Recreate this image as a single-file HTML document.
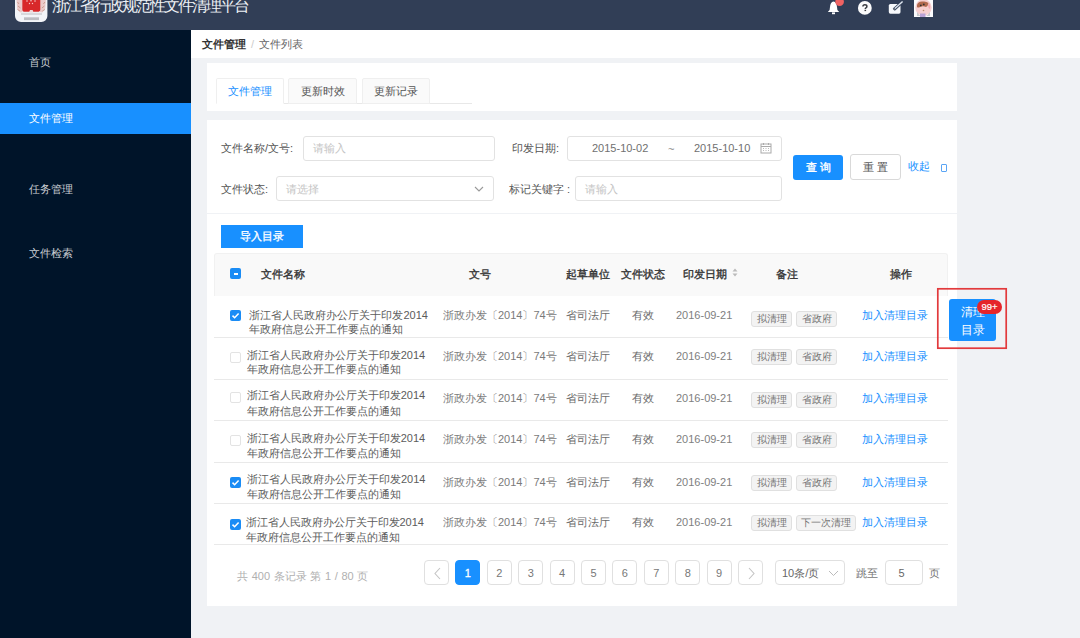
<!DOCTYPE html>
<html><head><meta charset="utf-8">
<style>
*{box-sizing:border-box;margin:0;padding:0}
html,body{width:1080px;height:638px;overflow:hidden;background:#f0f2f5;font-family:"Liberation Sans",sans-serif;font-size:11px;color:#666}
.a{position:absolute;white-space:nowrap}
.hdr{left:0;top:0;width:1080px;height:30px;background:#313e56}
.side{left:0;top:30px;width:191px;height:608px;background:#001429}
.menu{left:29px;color:#c8ccd2;font-size:11px;line-height:14px}
.crumb{left:191px;top:30px;width:889px;height:28px;background:#fff}
.card{background:#fff}
.tab{height:26px;border:1px solid #efefef;background:#fafafa;color:#555;font-size:11px;line-height:24px;text-align:center;border-radius:2px 2px 0 0}
.lbl{color:#555;font-size:11px;line-height:14px}
.inp{border:1px solid #e2e2e2;border-radius:3px;background:#fff;height:25px}
.ph{color:#c4c4c4;font-size:11px;line-height:14px}
.btn{border-radius:3px;font-size:11px;text-align:center}
.th{color:#333;font-weight:normal;-webkit-text-stroke:0.35px #333;font-size:11px;line-height:14px}
.td{color:#666;font-size:11px;line-height:14px}
.cb{width:11px;height:11px;border-radius:2px}
.cbon{background:#1a8cf5}
.cboff{border:1px solid #e3e3e3;background:#fff}
.line{height:1px;background:#e9e9e9}
.tag{height:16px;border:1px solid #e0e0e0;background:#f3f3f3;border-radius:3px;color:#777;font-size:10px;line-height:14px;text-align:center}
.link{color:#1890ff;font-size:11px;line-height:14px}
.pg{width:25px;height:25px;border:1px solid #e0e0e0;border-radius:4px;background:#fff;color:#666;font-size:11px;line-height:25px;text-align:center}
</style></head><body>
<!-- header -->
<div class="a hdr"></div>
<svg class="a" style="left:14.7px;top:0" width="33" height="23" viewBox="0 0 33 23">
  <path d="M0 0H32.4V16A6 6 0 0 1 26.4 22H6A6 6 0 0 1 0 16Z" fill="#f3f4f8"/>
  <path d="M1.5 0H7.5V12L5 12.5L2.2 9Z" fill="#eccaca"/>
  <path d="M30.9 0H25V12L27.4 12.5L30.2 9Z" fill="#eccaca"/>
  <path d="M2.5 2L4 4M3 6L5.5 8M2.5 9.5L5 11" stroke="#c89a8a" stroke-width="0.9"/>
  <path d="M29.9 2L28.4 4M29.4 6L26.9 8M29.9 9.5L27.4 11" stroke="#c89a8a" stroke-width="0.9"/>
  <path d="M7.3 0H25.3V9.5Q25.3 11.8 22.5 11.8H18.5L16.3 10L14.1 11.8H10Q7.3 11.8 7.3 9.5Z" fill="#d8282a"/>
  <circle cx="12" cy="1" r="0.8" fill="#f6c8c8"/><circle cx="16" cy="0.8" r="0.8" fill="#f6c8c8"/><circle cx="20" cy="1" r="0.8" fill="#f6c8c8"/>
  <circle cx="14.5" cy="3.5" r="0.7" fill="#f6c8c8"/><circle cx="17.5" cy="3.5" r="0.7" fill="#f6c8c8"/>
  <rect x="14.8" y="10" width="3" height="2.5" fill="#f0d6d6"/>
  <rect x="6" y="12.8" width="21" height="2.2" fill="#d8d8dc"/>
  <rect x="9" y="17.3" width="15" height="2.8" fill="#bdbdc2"/>
</svg>
<div class="a" style="left:52px;top:-4.5px;color:#eef1f5;font-size:16px;line-height:19px;letter-spacing:-2px">浙江省行政规范性文件清理平台</div>
<!-- header icons -->
<svg class="a" style="left:825px;top:0" width="22" height="16" viewBox="0 0 22 16">
  <path d="M8.5 1.4C6.3 1.6 5.2 4 5 7L4.6 10L2.8 12H14.2L12.4 10L12 7C11.8 4 10.7 1.6 8.5 1.4Z" fill="#fff"/>
  <rect x="7" y="12.4" width="3" height="1.8" fill="#fff"/>
  <circle cx="14.6" cy="1.8" r="4.3" fill="#f06262"/>
</svg>
<svg class="a" style="left:856px;top:0" width="18" height="16" viewBox="0 0 18 16">
  <circle cx="8.85" cy="7.9" r="6.9" fill="#fbfbfc"/>
  <path d="M6.9 6.6Q6.9 4.8 8.9 4.8Q10.9 4.8 10.9 6.4Q10.9 7.4 9.9 7.9Q9.3 8.2 9.3 9.1" fill="none" stroke="#3b3d42" stroke-width="1.5"/>
  <rect x="8.5" y="9.8" width="1.6" height="1.3" fill="#3b3d42"/>
</svg>
<svg class="a" style="left:886px;top:0" width="20" height="16" viewBox="0 0 20 16">
  <rect x="2.8" y="3.9" width="11.7" height="9.8" rx="1.6" fill="#f6f8fb"/>
  <path d="M7.8 9.6 L16.6 1.6" stroke="#313e56" stroke-width="3"/>
  <path d="M7.8 9.6 L16.6 1.6" stroke="#dfe6f0" stroke-width="1.4"/>
  <path d="M7.6 9.8 L9 8.5" stroke="#555c68" stroke-width="1.4"/>
</svg>
<svg class="a" style="left:914px;top:0" width="19" height="17" viewBox="0 0 19 17">
  <rect width="19" height="17" fill="#fbfbfd"/>
  <circle cx="9.5" cy="7.5" r="8.2" fill="#f7cfd0"/>
  <path d="M3 12 Q5 15 7 16 L3 16Z" fill="#c9c9cc"/>
  <path d="M16 12 Q14 15 12 16 L16 16Z" fill="#c9c9cc"/>
  <path d="M3 5 Q4 1 9 1.5 Q12 1 14.5 3 Q14 6 12 7 Q9 5.5 6 7 Q4 8 3 7Z" fill="#b26a4e"/>
  <circle cx="6.8" cy="5.4" r="0.9" fill="#333"/>
  <circle cx="9.8" cy="4.4" r="0.9" fill="#333"/>
  <path d="M15 3 Q17 6 16 9 Q14 8 14 5Z" fill="#f3a9b0"/>
  <rect x="6" y="13.5" width="5.5" height="3.5" fill="#b9a2d6"/>
  <circle cx="9.5" cy="10.5" r="0.8" fill="#b98a66"/>
</svg>

<!-- sidebar -->
<div class="a side"></div>
<div class="a menu" style="top:55px">首页</div>
<div class="a" style="left:0;top:103px;width:191px;height:31px;background:#1890ff"></div>
<div class="a menu" style="top:111px;color:#fff">文件管理</div>
<div class="a menu" style="top:182px">任务管理</div>
<div class="a menu" style="top:246px">文件检索</div>

<!-- breadcrumb -->
<div class="a crumb"></div>
<div class="a" style="left:202px;top:37px;font-size:11px;line-height:14px;color:#333;font-weight:bold">文件管理</div>
<div class="a" style="left:251px;top:37px;font-size:11px;line-height:14px;color:#ccc">/</div>
<div class="a" style="left:259px;top:37px;font-size:11px;line-height:14px;color:#666">文件列表</div>

<!-- tabs card -->
<div class="a card" style="left:207px;top:63px;width:750px;height:48px"></div>
<div class="a" style="left:216px;top:103px;width:256px;height:1px;background:#e8e8e8"></div>
<div class="a tab" style="left:216px;top:78px;width:68px;background:#fff;border-bottom-color:#fff;color:#1890ff">文件管理</div>
<div class="a tab" style="left:288px;top:78px;width:69px">更新时效</div>
<div class="a tab" style="left:362px;top:78px;width:68px">更新记录</div>

<!-- search card -->
<div class="a card" style="left:207px;top:120px;width:750px;height:93px"></div>
<div class="a lbl" style="left:221px;top:141px">文件名称/文号:</div>
<div class="a inp" style="left:303px;top:136px;width:192px"></div>
<div class="a ph" style="left:313px;top:141px">请输入</div>
<div class="a lbl" style="left:221px;top:182px">文件状态:</div>
<div class="a inp" style="left:276px;top:176px;width:218px"></div>
<div class="a ph" style="left:286px;top:182px">请选择</div>
<svg class="a" style="left:474px;top:186px" width="10" height="6" viewBox="0 0 10 6"><path d="M1 1 L5 5 L9 1" stroke="#999" stroke-width="1.1" fill="none"/></svg>

<div class="a lbl" style="left:512px;top:141px">印发日期:</div>
<div class="a inp" style="left:567px;top:136px;width:215px"></div>
<div class="a td" style="left:592px;top:141px;color:#707070">2015-10-02</div>
<div class="a td" style="left:668px;top:142px;color:#888">~</div>
<div class="a td" style="left:694px;top:141px;color:#707070">2015-10-10</div>
<svg class="a" style="left:760px;top:142px" width="12" height="12" viewBox="0 0 12 12"><rect x="1" y="2" width="10" height="9" fill="none" stroke="#aaa" stroke-width="1"/><path d="M1 4.5h10M3.5 1v2M8.5 1v2" stroke="#aaa" stroke-width="1"/><path d="M3 6.5h1M5.5 6.5h1M8 6.5h1M3 8.5h1M5.5 8.5h1M8 8.5h1" stroke="#bbb" stroke-width="1"/></svg>

<div class="a lbl" style="left:509px;top:182px">标记关键字 :</div>
<div class="a inp" style="left:575px;top:176px;width:207px"></div>
<div class="a ph" style="left:585px;top:182px">请输入</div>

<div class="a btn" style="left:793px;top:155px;width:50px;height:25px;background:#1890ff;color:#fff;line-height:25px;-webkit-text-stroke:0.35px #fff;letter-spacing:3px;padding-left:3px">查询</div>
<div class="a btn" style="left:850px;top:154px;width:51px;height:26px;border:1px solid #d9d9d9;background:#fff;color:#555;line-height:24px;letter-spacing:3px;padding-left:3px">重置</div>
<div class="a link" style="left:908px;top:159px">收起</div>
<div class="a" style="left:941px;top:164.3px;width:6px;height:7.5px;border:1px solid #5aa5f5;border-radius:1px"></div>

<!-- table card -->
<div class="a card" style="left:207px;top:214px;width:750px;height:392px"></div>
<div class="a btn" style="left:221px;top:225px;width:82px;height:23px;background:#1890ff;color:#fff;line-height:23px;font-size:11px;border-radius:0;-webkit-text-stroke:0.3px #fff">导入目录</div>
<div class="a" style="left:214px;top:253px;width:734px;height:43px;background:#f9f9f9;border-radius:3px 3px 0 0;border:1px solid #f1f1f1;border-bottom:none"></div>
<div class="a cb cbon" style="left:230px;top:268px"><div style="position:absolute;left:3.5px;top:5px;width:4px;height:1.5px;background:#fff"></div></div>
<div class="a th" style="left:261px;top:266.5px">文件名称</div>
<div class="a th" style="left:469px;top:266.5px">文号</div>
<div class="a th" style="left:566px;top:266.5px">起草单位</div>
<div class="a th" style="left:621px;top:266.5px">文件状态</div>
<div class="a th" style="left:683px;top:266.5px">印发日期</div>
<svg class="a" style="left:731.5px;top:267.5px" width="6" height="9" viewBox="0 0 6 9"><path d="M3 0.5L5.5 3.5H0.5Z M3 8.5L5.5 5.5H0.5Z" fill="#bbb"/></svg>
<div class="a th" style="left:776px;top:266.5px">备注</div>
<div class="a th" style="left:890px;top:266.5px">操作</div>

<div class="a cb cbon" style="left:230px;top:310.1px"><svg style="position:absolute;left:0;top:0" width="11" height="11" viewBox="0 0 11 11"><path d="M2.5 5.6 L4.6 7.7 L8.6 3.4" stroke="#fff" stroke-width="1.5" fill="none"/></svg></div>
<div class="a td" style="left:249.4px;top:307.5px;color:#5c5c5c">浙江省人民政府办公厅关于印发2014</div>
<div class="a td" style="left:249.4px;top:322.1px;color:#5c5c5c">年政府信息公开工作要点的通知</div>
<div class="a td" style="left:443px;top:307.7px;color:#7a7a7a">浙政办发〔2014〕74号</div>
<div class="a td" style="left:566px;top:307.7px;color:#6a6a6a">省司法厅</div>
<div class="a td" style="left:632px;top:307.7px;color:#6a6a6a">有效</div>
<div class="a td" style="left:676px;top:307.7px;color:#808080">2016-09-21</div>
<div class="a tag" style="left:751px;top:310.8px;width:41px">拟清理</div>
<div class="a tag" style="left:796px;top:310.8px;width:41px">省政府</div>
<div class="a link" style="left:862px;top:307.7px">加入清理目录</div>
<div class="a line" style="left:214px;top:336.5px;width:734px"></div>
<div class="a cb cboff" style="left:230px;top:352.4px"></div>
<div class="a td" style="left:246.7px;top:348.4px;color:#5c5c5c">浙江省人民政府办公厅关于印发2014</div>
<div class="a td" style="left:246.7px;top:362.2px;color:#5c5c5c">年政府信息公开工作要点的通知</div>
<div class="a td" style="left:443px;top:349.1px;color:#7a7a7a">浙政办发〔2014〕74号</div>
<div class="a td" style="left:566px;top:349.1px;color:#6a6a6a">省司法厅</div>
<div class="a td" style="left:632px;top:349.1px;color:#6a6a6a">有效</div>
<div class="a td" style="left:676px;top:349.1px;color:#808080">2016-09-21</div>
<div class="a tag" style="left:751px;top:349px;width:41px">拟清理</div>
<div class="a tag" style="left:796px;top:349px;width:41px">省政府</div>
<div class="a link" style="left:862px;top:349.1px">加入清理目录</div>
<div class="a line" style="left:214px;top:378.5px;width:734px"></div>
<div class="a cb cboff" style="left:230px;top:392.2px"></div>
<div class="a td" style="left:246.7px;top:388.3px;color:#5c5c5c">浙江省人民政府办公厅关于印发2014</div>
<div class="a td" style="left:246.7px;top:403.6px;color:#5c5c5c">年政府信息公开工作要点的通知</div>
<div class="a td" style="left:443px;top:391.0px;color:#7a7a7a">浙政办发〔2014〕74号</div>
<div class="a td" style="left:566px;top:391.0px;color:#6a6a6a">省司法厅</div>
<div class="a td" style="left:632px;top:391.0px;color:#6a6a6a">有效</div>
<div class="a td" style="left:676px;top:391.0px;color:#808080">2016-09-21</div>
<div class="a tag" style="left:751px;top:391.6px;width:41px">拟清理</div>
<div class="a tag" style="left:796px;top:391.6px;width:41px">省政府</div>
<div class="a link" style="left:862px;top:391.0px">加入清理目录</div>
<div class="a line" style="left:214px;top:420px;width:734px"></div>
<div class="a cb cboff" style="left:230px;top:434.7px"></div>
<div class="a td" style="left:246.7px;top:431.3px;color:#5c5c5c">浙江省人民政府办公厅关于印发2014</div>
<div class="a td" style="left:246.7px;top:446.1px;color:#5c5c5c">年政府信息公开工作要点的通知</div>
<div class="a td" style="left:443px;top:432.3px;color:#7a7a7a">浙政办发〔2014〕74号</div>
<div class="a td" style="left:566px;top:432.3px;color:#6a6a6a">省司法厅</div>
<div class="a td" style="left:632px;top:432.3px;color:#6a6a6a">有效</div>
<div class="a td" style="left:676px;top:432.3px;color:#808080">2016-09-21</div>
<div class="a tag" style="left:751px;top:432.4px;width:41px">拟清理</div>
<div class="a tag" style="left:796px;top:432.4px;width:41px">省政府</div>
<div class="a link" style="left:862px;top:432.3px">加入清理目录</div>
<div class="a line" style="left:214px;top:461.6px;width:734px"></div>
<div class="a cb cbon" style="left:230px;top:476.5px"><svg style="position:absolute;left:0;top:0" width="11" height="11" viewBox="0 0 11 11"><path d="M2.5 5.6 L4.6 7.7 L8.6 3.4" stroke="#fff" stroke-width="1.5" fill="none"/></svg></div>
<div class="a td" style="left:246.9px;top:472.2px;color:#5c5c5c">浙江省人民政府办公厅关于印发2014</div>
<div class="a td" style="left:246.9px;top:487.1px;color:#5c5c5c">年政府信息公开工作要点的通知</div>
<div class="a td" style="left:443px;top:474.7px;color:#7a7a7a">浙政办发〔2014〕74号</div>
<div class="a td" style="left:566px;top:474.7px;color:#6a6a6a">省司法厅</div>
<div class="a td" style="left:632px;top:474.7px;color:#6a6a6a">有效</div>
<div class="a td" style="left:676px;top:474.7px;color:#808080">2016-09-21</div>
<div class="a tag" style="left:751px;top:474.6px;width:41px">拟清理</div>
<div class="a tag" style="left:796px;top:474.6px;width:41px">省政府</div>
<div class="a link" style="left:862px;top:474.7px">加入清理目录</div>
<div class="a line" style="left:214px;top:503px;width:734px"></div>
<div class="a cb cbon" style="left:230px;top:519.0px"><svg style="position:absolute;left:0;top:0" width="11" height="11" viewBox="0 0 11 11"><path d="M2.5 5.6 L4.6 7.7 L8.6 3.4" stroke="#fff" stroke-width="1.5" fill="none"/></svg></div>
<div class="a td" style="left:245.5px;top:514.7px;color:#5c5c5c">浙江省人民政府办公厅关于印发2014</div>
<div class="a td" style="left:245.5px;top:530.2px;color:#5c5c5c">年政府信息公开工作要点的通知</div>
<div class="a td" style="left:443px;top:515.1px;color:#7a7a7a">浙政办发〔2014〕74号</div>
<div class="a td" style="left:566px;top:515.1px;color:#6a6a6a">省司法厅</div>
<div class="a td" style="left:632px;top:515.1px;color:#6a6a6a">有效</div>
<div class="a td" style="left:676px;top:515.1px;color:#808080">2016-09-21</div>
<div class="a tag" style="left:751px;top:514.6px;width:41px">拟清理</div>
<div class="a tag" style="left:796px;top:514.6px;width:60px">下一次清理</div>
<div class="a link" style="left:862px;top:515.1px">加入清理目录</div>
<div class="a line" style="left:214px;top:544px;width:734px"></div>

<!-- pagination -->
<div class="a" style="left:237px;top:569px;color:#b0b0b0;font-size:11px;line-height:14px;word-spacing:0.6px">共 400 条记录 第 1 / 80 页</div>
<div class="a pg" style="left:424.0px;top:560px"><svg style="position:absolute;left:7.5px;top:5.5px" width="9" height="13" viewBox="0 0 9 13"><path d="M7 1 L2 6.5 L7 12" stroke="#c4c4c4" stroke-width="1.1" fill="none"/></svg></div>
<div class="a pg" style="left:455.4px;top:560px;background:#1890ff;border-color:#1890ff;color:#fff;-webkit-text-stroke:0.3px #fff">1</div>
<div class="a pg" style="left:486.8px;top:560px;color:#777">2</div>
<div class="a pg" style="left:518.2px;top:560px;color:#777">3</div>
<div class="a pg" style="left:549.6px;top:560px;color:#777">4</div>
<div class="a pg" style="left:581.0px;top:560px;color:#777">5</div>
<div class="a pg" style="left:612.4px;top:560px;color:#777">6</div>
<div class="a pg" style="left:643.8px;top:560px;color:#777">7</div>
<div class="a pg" style="left:675.2px;top:560px;color:#777">8</div>
<div class="a pg" style="left:706.6px;top:560px;color:#777">9</div>
<div class="a pg" style="left:738.0px;top:560px"><svg style="position:absolute;left:7.5px;top:5.5px" width="9" height="13" viewBox="0 0 9 13"><path d="M2 1 L7 6.5 L2 12" stroke="#c4c4c4" stroke-width="1.1" fill="none"/></svg></div>
<div class="a pg" style="left:775px;top:560px;width:70px;text-align:left;padding-left:6px;line-height:24px">10条/页</div>
<svg class="a" style="left:828px;top:570px" width="11" height="7" viewBox="0 0 11 7"><path d="M1 1 L5.5 5.5 L10 1" stroke="#bbb" stroke-width="1" fill="none"/></svg>
<div class="a td" style="left:856px;top:566px;color:#777">跳至</div>
<div class="a pg" style="left:885px;top:560px;width:38px;padding-right:5px">5</div>
<div class="a td" style="left:929px;top:566px;color:#777">页</div>

<!-- clean button -->
<svg class="a" style="left:936px;top:287px" width="72" height="63" viewBox="0 0 72 63"><rect x="1.8" y="1.8" width="68.4" height="59.4" fill="none" stroke="#e23a3c" stroke-width="1.7"/></svg>
<div class="a btn" style="left:949px;top:299px;width:47px;height:42px;background:#1890ff;color:#fff;font-size:12px;line-height:17.5px;padding-top:5px">清理<br>目录</div>
<div class="a" style="left:977px;top:300px;width:25px;height:14px;border-radius:7px;background:#e5252a;color:#fff;font-size:9.5px;line-height:14px;text-align:center;-webkit-text-stroke:0.2px #fff">99+</div>

<script>
</script>
</body></html>
